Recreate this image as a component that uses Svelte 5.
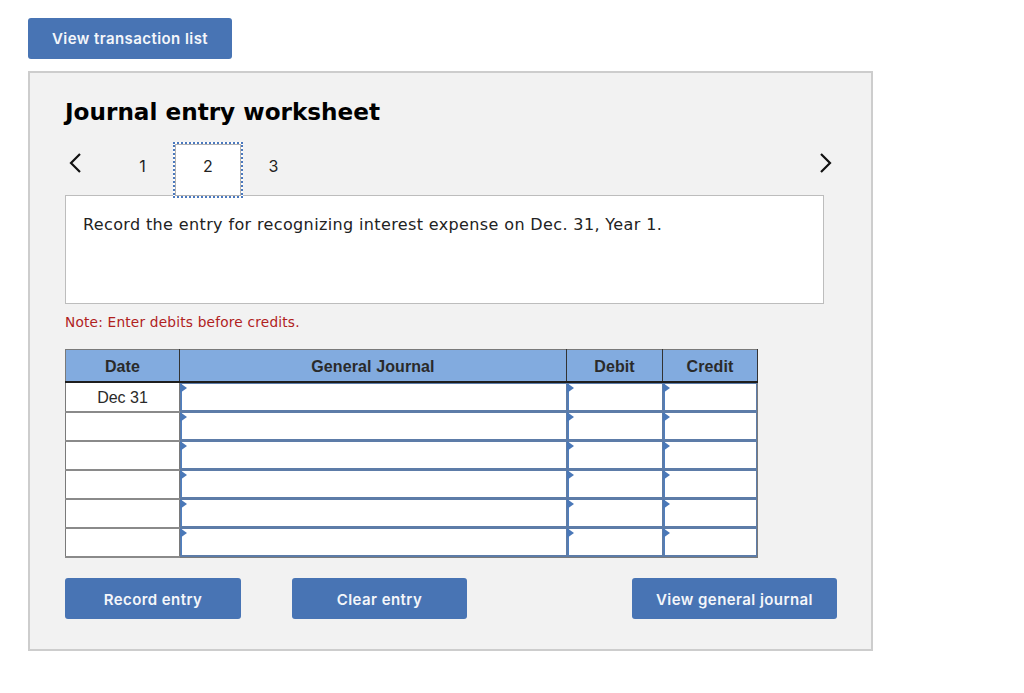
<script>
	const tabs = ['1', '2', '3'];
	const active = '2';
	const rows = ['Dec 31', '', '', '', '', ''];
</script>

<main class="page">
	<button class="btn btn--top" type="button">View transaction list</button>

	<section class="worksheet">
		<h1 class="worksheet__title">Journal entry worksheet</h1>

		<nav class="pager">
			<svg class="pager__arrow pager__arrow--prev" width="14" height="22" viewBox="0 0 14 22" aria-hidden="true">
				<path d="M12 2 L3 11 L12 20" />
			</svg>
			<div class="pager__tabs">
				{#each tabs as tab}
					<span class="pager__tab" class:pager__tab--active={tab === active}>{tab}</span>
				{/each}
			</div>
			<svg class="pager__arrow" width="14" height="22" viewBox="0 0 14 22" aria-hidden="true">
				<path d="M2 2 L11 11 L2 20" />
			</svg>
		</nav>

		<div class="prompt">Record the entry for recognizing interest expense on Dec. 31, Year 1.</div>

		<p class="note">Note: Enter debits before credits.</p>

		<table class="journal">
			<thead>
				<tr>
					<th class="col-date">Date</th>
					<th class="col-journal">General Journal</th>
					<th class="col-debit">Debit</th>
					<th class="col-credit">Credit</th>
				</tr>
			</thead>
			<tbody>
				{#each rows as date}
					<tr>
						<td class="date">{date}</td>
						<td class="entry"><div class="entry__field"></div></td>
						<td class="entry"><div class="entry__field"></div></td>
						<td class="entry"><div class="entry__field"></div></td>
					</tr>
				{/each}
			</tbody>
		</table>

		<div class="actions">
			<button class="btn btn--action btn--record" type="button">Record entry</button>
			<button class="btn btn--action btn--clear" type="button">Clear entry</button>
			<button class="btn btn--action btn--view" type="button">View general journal</button>
		</div>
	</section>
</main>

<style>
	:global(body) {
		background: #fff;
		font-family: 'DejaVu Sans', sans-serif;
	}

	.page {
		padding: 18px 0 0 28px;
		width: 845px;
	}

	.btn {
		display: block;
		height: 41px;
		padding: 0;
		border: none;
		border-radius: 3px;
		background: #4874b4;
		color: #f4f6fa;
		font-family: Inter, 'Noto Sans', sans-serif;
		font-size: 15px;
		font-weight: 600;
		letter-spacing: 0.43px;
	}

	.btn--action {
		padding-top: 1px;
	}

	.btn--top {
		width: 204px;
		margin-bottom: 12px;
	}

	.worksheet {
		box-sizing: border-box;
		height: 580px;
		padding: 0 35px;
		border: 2px solid #cdcdcd;
		background: #f2f2f2;
	}

	.worksheet__title {
		margin: 24px 0 0;
		font-size: 23.15px;
		line-height: 30px;
		font-weight: 700;
		color: #000;
	}

	.pager {
		display: flex;
		justify-content: space-between;
		align-items: center;
		position: relative;
		z-index: 1;
		width: 768px;
		height: 56px;
		margin-top: 15px;
		margin-bottom: -3px;
	}

	.pager__arrow {
		flex: none;
		margin-top: -15px;
		fill: none;
		stroke: #111;
		stroke-width: 2.2;
	}

	.pager__arrow--prev {
		margin-left: 3px;
	}

	.pager__tabs {
		display: flex;
		flex: 1;
		margin-left: 28px;
		font-family: Inter, 'Noto Sans', sans-serif;
		font-size: 16px;
		color: #222;
	}

	.pager__tab {
		box-sizing: border-box;
		display: flex;
		align-items: center;
		justify-content: center;
		width: 65px;
		height: 56px;
		padding-bottom: 9px;
	}

	.pager__tab--active {
		width: 70px;
		margin: 0 -2px;
		border: 2px dotted #4a78bd;
		background: #fff;
		box-shadow: inset 0 0 0 1px #b4b4b4;
	}

	.prompt {
		box-sizing: border-box;
		width: 759px;
		height: 109px;
		padding: 19px 17px;
		border: 1px solid #bdbdbd;
		background: #fff;
		font-size: 16px;
		letter-spacing: 0.37px;
		line-height: 20px;
		color: #222;
	}

	.note {
		margin: 9px 0 0;
		font-size: 13.7px;
		letter-spacing: 0.2px;
		line-height: 18px;
		color: #b0211d;
	}

	.journal {
		table-layout: fixed;
		width: 693px;
		margin-top: 18px;
		border-collapse: collapse;
		border: 1px solid #7a7a7a;
		background: #fff;
		font-family: 'Liberation Sans', sans-serif;
		font-size: 16px;
		color: #2a2a2a;
	}

	.col-date {
		width: 114px;
	}

	.col-journal {
		width: 387px;
	}

	.col-debit {
		width: 96px;
	}

	th {
		box-sizing: border-box;
		height: 32px;
		padding: 3px 0 0;
		border: 1px solid #333;
		border-top: none;
		border-left-color: #7a7a7a;
		border-bottom: 2px solid #1e1e1e;
		background: #82abdf;
		font-weight: 700;
		letter-spacing: 0.1px;
	}

	td {
		box-sizing: border-box;
		height: 29px;
		padding: 0;
	}

	.date {
		border-bottom: 2px solid #8a8a8a;
		border-right: 1px solid #7a7a7a;
		padding-top: 3px;
		text-align: center;
	}

	.entry {
		background: #5d7ca8;
		padding: 0 1px 2px 1px;
		vertical-align: top;
	}

	.entry__field {
		position: relative;
		box-sizing: border-box;
		height: 26px;
		margin-top: 1px;
		border-left: 1px solid #4f7fc0;
		background: #fff;
	}

	.entry__field::before {
		content: '';
		position: absolute;
		left: -2px;
		top: -1px;
		border-left: 7px solid #4a78b8;
		border-top: 5px solid transparent;
		border-bottom: 5px solid transparent;
	}

	.actions {
		display: flex;
		margin-top: 20px;
		width: 772px;
	}

	.btn--record {
		width: 176px;
	}

	.btn--clear {
		width: 175px;
		margin-left: 51px;
	}

	.btn--view {
		width: 205px;
		margin-left: auto;
	}
</style>
